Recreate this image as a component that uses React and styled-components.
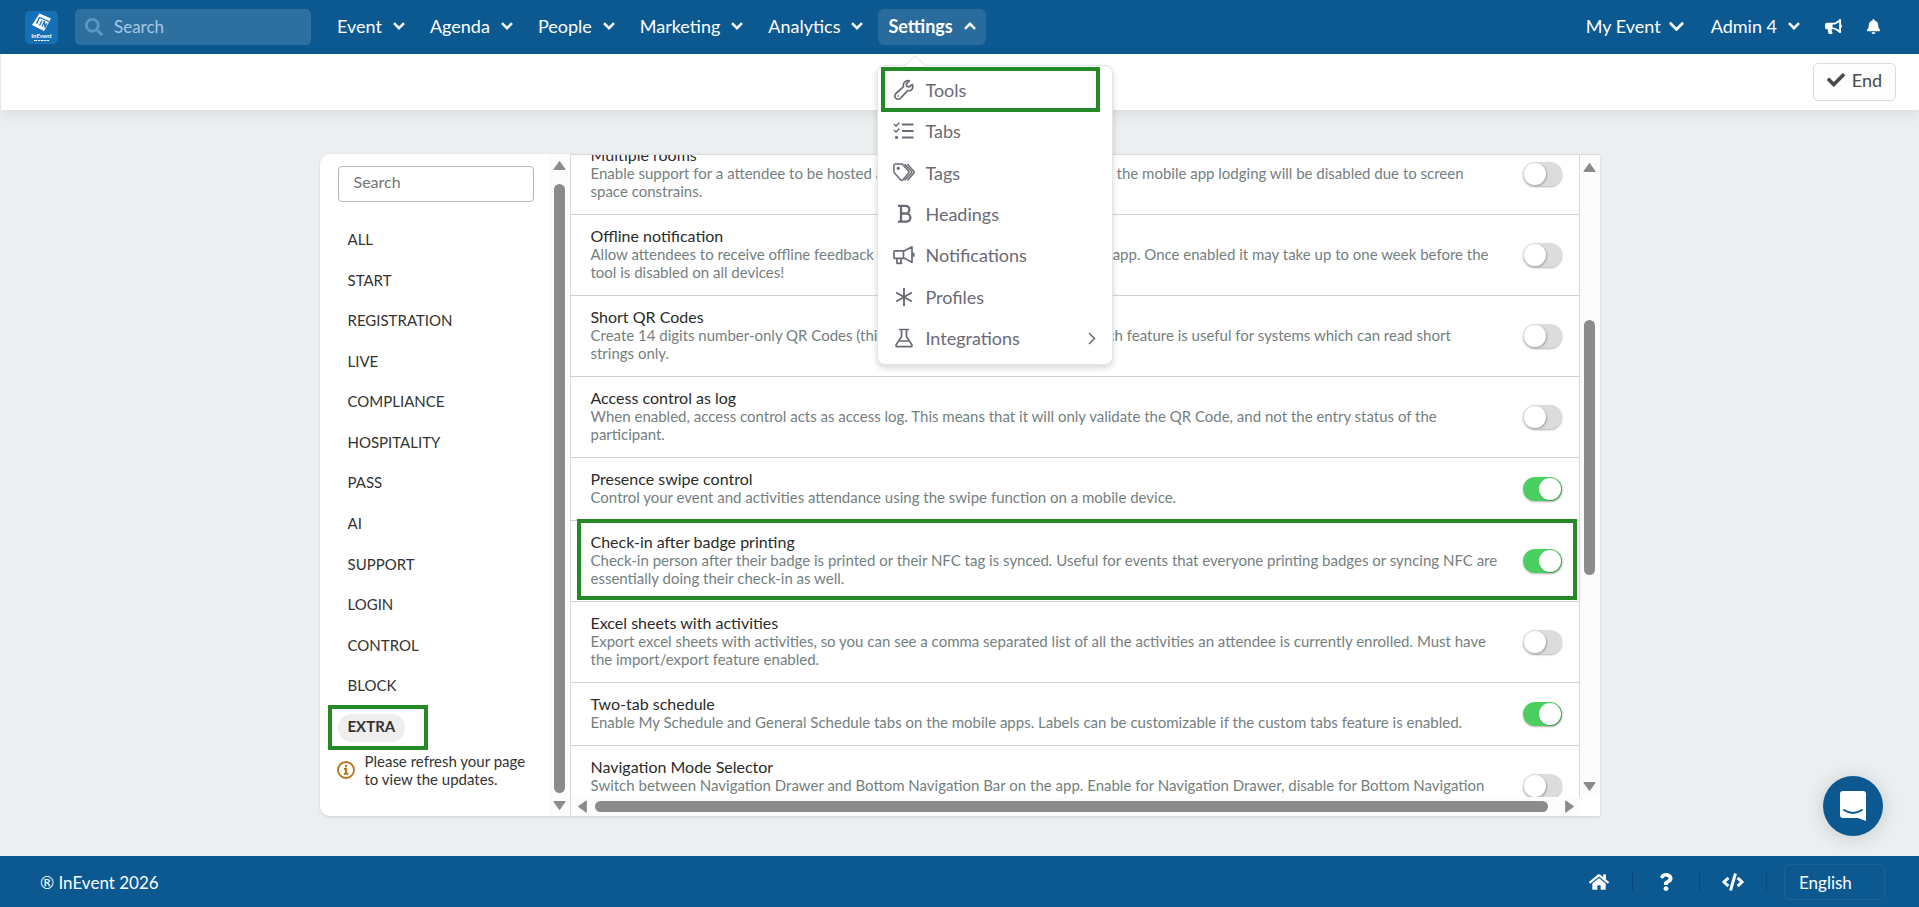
import React from "react";
import styled, { createGlobalStyle, css } from "styled-components";
import { FaSearch, FaChevronDown, FaCheck, FaBullhorn, FaBell, FaHome, FaQuestion, FaCode } from "react-icons/fa";

const Global = createGlobalStyle`
  * { box-sizing: border-box; }
  body { margin: 0; background: #ebefef; font-family: Lato, "Liberation Sans", sans-serif; color: #333; }
  button, input, select { font-family: inherit; }
`;

const Shell = styled.div`display: flex; flex-direction: column; height: 100vh; min-height: 600px;`;

const Header = styled.header`
  height: 54px; flex: none; display: flex; align-items: center; background: #0c5992;
  padding: 0 29px 0 25px; color: #fff;
`;
const Logo = styled.a`display: block; width: 33px; height: 33px; margin-right: 17px;`;
const HeaderSearch = styled.label`
  display: flex; align-items: center; width: 236px; height: 36px; border-radius: 5px;
  background: #2d6f9f; color: #5b96c6; padding-left: 10px; gap: 11px; margin-right: 16px;
  input { flex: 1; min-width: 0; border: 0; background: none; outline: 0; font-size: 17px; color: #fff; padding: 0 0 2px; }
  input::placeholder { color: #a5c8e4; opacity: 1; }
`;
const Nav = styled.nav`display: flex; gap: 5px; flex: 1;`;
const NavItem = styled.div`position: relative;`;
const NavButton = styled.button`
  display: flex; align-items: center; gap: ${(p) => (p.$tight ? "7px" : "11px")}; height: 36px; padding: 0 10px 2px;
  border: 0; border-radius: 6px; background: ${(p) => (p.$open ? "#2a6b9d" : "none")}; color: #fff; font-size: 18px;
  font-weight: ${(p) => (p.$open ? 700 : 400)};
`;
const Account = styled.div`display: flex; align-items: center; gap: 6px;`;
const IconButton = styled.button`
  display: flex; align-items: center; justify-content: center; width: 34px; height: 36px; padding: 0 0 2px;
  border: 0; background: none; color: #fff;
`;

const Menu = styled.div`
  position: absolute; z-index: 5; left: -1px; top: 56px; width: 236px; height: 300px; background: #fff; border-radius: 8px;
  border: 1px solid #e3e4e6; box-shadow: 0 3px 6px rgba(0,0,0,.16); padding: 3px 12px 5px 3px;
  display: grid; grid-auto-rows: 1fr;
`;
const MenuArrow = styled.svg`position: absolute; left: 26px; top: -11px;`;
const MenuLink = styled.a`
  display: flex; align-items: center; gap: 10px; padding: 0 4px 0 12px; color: #6b6a75;
  font-size: 18px; text-decoration: none;
  ${(p) => p.$marked && css`
    margin: -2px 0; padding: 0 4px 0 8px; border: 4px solid #258925;
  `}
  span { flex: 1; }
`;

const ActionBar = styled.div`
  flex: none; height: 56px; display: flex; justify-content: flex-end; align-items: flex-start; background: #fff;
  padding: 9px 23px; box-shadow: 0 4px 12px rgba(0,0,0,.08); border-left: 1px solid #e4e8ea;
`;
const EndButton = styled.button`
  height: 38px; width: 83px; display: flex; align-items: center; justify-content: center; gap: 7px; padding: 0 0 4px;
  border: 1px solid #dcdcdc; border-radius: 5px; background: #fdfdfd; font-size: 18px; color: #4a4a4a;
`;

const Main = styled.main`flex: 1; min-height: 0; padding: 44px 20px 40px; display: flex; justify-content: center;`;
const Card = styled.section`
  width: 100%; max-width: 1280px; display: flex; background: #fff; border-radius: 10px 0 0 10px;
  box-shadow: 0 1px 3px rgba(0,0,0,.12); overflow: hidden;
`;
const Side = styled.aside`width: 251px; flex: none; display: flex; border-right: 1px solid #d8dbdc;`;
const SideBody = styled.div`flex: 1; min-width: 0; display: flex; flex-direction: column; padding: 12px 0 28px 8px;`;
const SideSearch = styled.input`
  margin: 0 16px 17px 10px; min-width: 0; height: 36px; flex: none; border: 1px solid #b3b6b8; border-radius: 4px;
  padding: 0 15px 5px; font-size: 16px; color: #333; outline: 0;
  &::placeholder { color: #757575; opacity: 1; }
`;
const Tabs = styled.ul`flex: 1; min-height: 0; margin: 0; padding: 0; list-style: none; display: grid; grid-auto-rows: 1fr;`;
const Tab = styled.li`
  display: flex; align-items: center; padding-left: 10px;
  ${(p) => p.$active && css`
    width: 100px; margin: 0 0 -4px; padding-left: 6px; border: 4px solid #258925;
  `}
`;
const TabLink = styled.a`
  display: flex; align-items: center; height: 28px; padding: 0 10px; border-radius: 14px; font-size: 15px; color: #333;
  text-decoration: none; ${(p) => p.$active && css`font-weight: 700; background: #eeeeee; padding-bottom: 3px;`}
`;
const Notice = styled.p`
  margin: 6px 0 0; padding-left: 9px; display: flex; align-items: center; gap: 10px; font-size: 15px; line-height: 18px; color: #333;
  span { flex: 1; max-width: 170px; }
`;

const VBar = styled.div`
  width: 20px; display: flex; flex-direction: column; align-items: center; flex: none; background: #fcfcfc;
  padding: ${(p) => p.$pad}; gap: ${(p) => p.$gap};
`;
const Track = styled.div`flex: 1; align-self: stretch; display: flex; flex-direction: ${(p) => (p.$row ? "row" : "column")}; align-items: center;`;
const Thumb = styled.div`
  border-radius: 6px; background: #8b8b8b; flex: ${(p) => p.$size};
  ${(p) => (p.$row ? "height: 11px;" : "width: 11px;")}
`;
const Spacer = styled.div`flex: ${(p) => p.$size};`;
const HBar = styled.div`
  display: flex; align-items: center; height: 19px; background: #fcfcfc; padding: 0 5px 0 6px; gap: 8px;
`;

const Content = styled.div`
  flex: 1; min-width: 0; display: grid; grid-template-columns: minmax(0, 1fr) 20px;
  grid-template-rows: minmax(0, 1fr) 19px; border-top: 1px solid #d8dbdc;
`;
const Viewport = styled.div`overflow: hidden; border-right: 1px solid #d8dbdc;`;
const Rows = styled.div`margin-top: -21px;`;
const Row = styled.div`
  position: relative; display: flex; align-items: center; padding: 12px 17px 14px 20px; border-bottom: 1px solid #d0d3d4;
  ${(p) => p.$marked && css`
    &::after { content: ""; position: absolute; inset: -2px 2px 1px 6px; border: 4px solid #258925; pointer-events: none; }
  `}
`;
const RowText = styled.div`flex: 1; min-width: 0; margin-right: 24px;`;
const RowTitle = styled.label`display: block; font-size: 16px; line-height: 18px; color: #2b2b2b;`;
const RowNote = styled.p`margin: 0; font-size: 15px; line-height: 18px; color: #74807f;`;
const Switch = styled.input`
  appearance: none; flex: none; margin: 2px 0 0; width: 39px; height: 24px; border-radius: 12px; padding: 1px;
  background: ${(p) => (p.defaultChecked ? "#4ccf61" : "#dcdcdc")}; box-shadow: 0 1px 2px rgba(0,0,0,.3);
  display: flex; justify-content: ${(p) => (p.defaultChecked ? "flex-end" : "flex-start")};
  &::before { content: ""; width: 22px; height: 22px; border-radius: 50%; background: #fff; box-shadow: 1px 1px 2px rgba(0,0,0,.25); }
`;

const Footer = styled.footer`
  flex: none; height: 51px; background: #0c5992; color: #fff; display: flex; align-items: center;
  padding: 1px 34px 0 40px; font-size: 17px;
  > span { flex: 1; }
`;
const FooterLink = styled.a`
  width: 67px; height: 20px; display: flex; align-items: center; justify-content: center; color: #fff;
  border-right: 1px solid #0a4a7b;
`;
const Language = styled.select`
  appearance: none; width: 101px; height: 36px; margin-left: 17px; padding: 0 14px; border: 1px solid #1a639a; border-radius: 5px;
  background: none; color: #fff; font-size: 17px;
`;
const Chat = styled.button`
  position: fixed; right: 36px; bottom: 71px; width: 60px; height: 60px; border: 0; border-radius: 50%; padding: 0;
  background: #0c5992; box-shadow: 0 2px 20px rgba(0,0,0,.15); display: flex; align-items: center; justify-content: center;
`;

const Chevron = ({ up }) => (
  <svg width="12" height="8" viewBox="0 0 12 8" fill="none" stroke="currentColor" strokeWidth="2.5">
    <path d={up ? "M1 6.800 6 1.800l5 5" : "M1 1.200l5 5 5-5"} />
  </svg>
);
const Arrow = ({ dir }) => {
  const d = {
    up: "M6.5 0.8 12.4 9a.6.6 0 0 1-.5.9H1.1a.6.6 0 0 1-.5-.9z",
    down: "M6.5 9.2.6 1A.6.6 0 0 1 1.1.1h10.8a.6.6 0 0 1 .5.9z",
    left: "M.8 6.5 9 .6a.6.6 0 0 1 .9.5v10.8a.6.6 0 0 1-.9.5z",
    right: "M9.2 6.5 1 .6a.6.6 0 0 0-.9.5v10.8a.6.6 0 0 0 .9.5z",
  };
  const flat = dir === "up" || dir === "down";
  return (
    <svg width={flat ? 13 : 10} height={flat ? 10 : 13} fill="#8b8b8b"><path d={d[dir]} /></svg>
  );
};

const LogoArt = () => (
  <svg width="33" height="33" viewBox="0 0 33 33" role="img" aria-label="InEvent">
    <rect width="33" height="33" rx="5" fill="#1670b5" />
    <path d="M14.500 2.500 26 7.500 19 20 7 14z" fill="#fff" />
    <path d="M11.500 12.800 14.500 6.500 24 10.500M14.500 14.500 17 9.500M17 15.500l2.500-5.300.3 6.300 2-4.300" stroke="#1670b5" strokeWidth="1.300" fill="none" />
    <text x="16.500" y="27" fontSize="6" fontWeight="700" textAnchor="middle" fill="#fff">InEvent</text>
    <path d="M9 29.500h15" stroke="#fff" strokeWidth="1.200" strokeDasharray="3 .8 2 .8" />
  </svg>
);

const Line = ({ children }) => (
  <svg width="22" height="22" viewBox="0 0 22 22" fill="none" stroke="currentColor" strokeWidth="1.7" strokeLinejoin="round" strokeLinecap="round">{children}</svg>
);
const menu = [
  ["Tools", <path d="M19.300 5.500 16 8l-2.200-.6L13.200 5l3-3.200c-3.500-.8-6.700 2-5.700 5.900L3 14.500c-3.200 3.200 1.200 8 4.600 4.600L14.600 11.600c4 .8 6.200-2.600 4.700-6.100zM5.300 16.900v.1" />],
  ["Tabs", <><path d="M1.500 4.500 3 6 6 3M1.500 10.500 3 12 6 9" strokeWidth="1.600" /><circle cx="3.500" cy="17.500" r="1.200" fill="currentColor" strokeWidth="1" /><path d="M9 4.500h11.500M9 11h11.500M9 17.500h11.500" strokeWidth="2" strokeLinecap="butt" /></>],
  ["Tags", <><path d="M.9 3.300q0-1.300 1.300-1.300h6.300q.7 0 1.200.5l6 6.700q.8.900 0 1.700l-6 7q-1 1-2 0L1.500 11q-.6-.6-.6-1.400zM12 2.500l6.500 7q.7.700 0 1.400L12 18M14.800 2.500l6.200 7q.7.700 0 1.400l-6.200 7" strokeWidth="1.500" /><circle cx="5.200" cy="6.300" r=".8" fill="currentColor" /></>],
  ["Headings", <path d="M5 2.800h7.500a3.700 3.700 0 0 1 0 7.700H8.500h4.800a4 4 0 0 1 0 8.200H5M8 2.800v15.900" strokeWidth="2.300" strokeLinecap="butt" />],
  ["Notifications", <path d="M2 6.800h9.500l7.500-4v15.500l-7.500-4H2q-1 0-1-1V7.800q0-1 1-1zM10.500 6.800v7.500M4 14.300v5h4.500q-1-2-.5-5M20.700 9.300v2.800" />],
  ["Profiles", <path d="M11 2v18M3.200 6.500l15.600 9M18.800 6.500l-15.600 9" strokeLinecap="butt" strokeWidth="1.900" />],
  ["Integrations", <path d="M6.500 2.500h9M8.500 2.500v7L3.200 17.800q-.7 1.900 1.300 1.900h13q2 0 1.300-1.900l-5.300-8.300v-7M6 14h10" />],
];

const tabs = ["ALL", "START", "REGISTRATION", "LIVE", "COMPLIANCE", "HOSPITALITY", "PASS", "AI", "SUPPORT", "LOGIN", "CONTROL", "BLOCK", "EXTRA"];
const tools = [
  ["Multiple rooms", "Enable support for a attendee to be hosted at different rooms. When turned on, the mobile app lodging will be disabled due to screen space constrains.", false],
  ["Offline notification", "Allow attendees to receive offline feedback notifications directly in your mobile app. Once enabled it may take up to one week before the tool is disabled on all devices!", false],
  ["Short QR Codes", "Create 14 digits number-only QR Codes (this is for the last attendees only), which feature is useful for systems which can read short strings\u00a0only.", false],
  ["Access control as log", "When enabled, access control acts as access log. This means that it will only validate the QR Code, and not the entry status of the participant.", false],
  ["Presence swipe control", "Control your event and activities attendance using the swipe function on a mobile device.", true],
  ["Check-in after badge printing", "Check-in person after their badge is printed or their NFC tag is synced. Useful for events that everyone printing badges or syncing NFC are essentially doing their check-in as well.", true, true],
  ["Excel sheets with activities", "Export excel sheets with activities, so you can see a comma separated list of all the activities an attendee is currently enrolled. Must have the import/export feature enabled.", false],
  ["Two-tab schedule", "Enable My Schedule and General Schedule tabs on the mobile apps. Labels can be customizable if the custom tabs feature is enabled.", true],
  ["Navigation Mode Selector", "Switch between Navigation Drawer and Bottom Navigation Bar on the app. Enable for Navigation Drawer, disable for Bottom Navigation Bar.", false],
];

export default function App() {
  return (
    <Shell>
      <Global />
      <Header>
        <Logo href="#" aria-label="InEvent"><LogoArt /></Logo>
        <HeaderSearch>
          <FaSearch size={18} />
          <input type="search" placeholder="Search" aria-label="Search" />
        </HeaderSearch>
        <Nav>
          {["Event", "Agenda", "People", "Marketing", "Analytics"].map((n) => (
            <NavItem key={n}><NavButton>{n}<Chevron /></NavButton></NavItem>
          ))}
          <NavItem>
            <NavButton $open aria-expanded="true">Settings<Chevron up /></NavButton>
            <Menu>
              <MenuArrow width="22" height="12" fill="#fff" stroke="#dcdee0"><path d="M0 11.500 11 .7l11 10.800" /></MenuArrow>
              {menu.map(([label, icon]) => (
                <MenuLink key={label} href="#" $marked={label === "Tools"}>
                  <Line>{icon}</Line><span>{label}</span>
                  {label === "Integrations" && (
                    <svg width="8" height="13" fill="none" stroke="currentColor" strokeWidth="1.500"><path d="m1 1 5.500 5.500L1 12" /></svg>
                  )}
                </MenuLink>
              ))}
            </Menu>
          </NavItem>
        </Nav>
        <Account>
          <NavButton $tight>My Event<FaChevronDown size={17} /></NavButton>
          <NavButton>Admin 4<Chevron /></NavButton>
          <IconButton aria-label="Announcements"><FaBullhorn size={17} /></IconButton>
          <IconButton aria-label="Notifications"><FaBell size={15} /></IconButton>
        </Account>
      </Header>
      <ActionBar><EndButton><FaCheck size={18} />End</EndButton></ActionBar>
      <Main>
        <Card>
          <Side>
            <SideBody>
              <SideSearch type="search" placeholder="Search" aria-label="Search tools" />
              <Tabs>
                {tabs.map((t) => (
                  <Tab key={t} $active={t === "EXTRA"}><TabLink href="#" $active={t === "EXTRA"}>{t}</TabLink></Tab>
                ))}
              </Tabs>
              <Notice>
                <svg width="18" height="18" fill="none" stroke="#b8741a" strokeWidth="1.800"><circle cx="9" cy="9" r="8" /><path d="M9 4v2.200M7 8h2v4.500M6.800 12.800h4.500" strokeWidth="2" /></svg>
                <span>Please refresh your page to view the updates.</span>
              </Notice>
            </SideBody>
            <VBar $pad="6px 0 5px" $gap="8px">
              <Arrow dir="up" /><Track><Spacer $size="0 0 6px" /><Thumb $size={1} /></Track><Arrow dir="down" />
            </VBar>
          </Side>
          <Content>
            <Viewport>
              <Rows>
                {tools.map(([title, note, on, marked], i) => (
                  <Row key={title} $marked={marked}>
                    <RowText>
                      <RowTitle htmlFor={`tool-${i}`}>{title}</RowTitle>
                      <RowNote>{note}</RowNote>
                    </RowText>
                    <Switch type="checkbox" id={`tool-${i}`} defaultChecked={on} />
                  </Row>
                ))}
              </Rows>
            </Viewport>
            <VBar $pad="7px 0 5px" $gap="15px">
              <Arrow dir="up" />
              <Track><Spacer $size={133} /><Thumb $size={256} /><Spacer $size={193} /></Track>
              <Arrow dir="down" />
            </VBar>
            <HBar>
              <Arrow dir="left" />
              <Track $row><Thumb $row $size={954} /><Spacer $size={9} /></Track>
              <Arrow dir="right" />
            </HBar>
          </Content>
        </Card>
      </Main>
      <Footer>
        <span>® InEvent 2026</span>
        <FooterLink href="#" aria-label="Home"><FaHome size={20} /></FooterLink>
        <FooterLink href="#" aria-label="Help"><FaQuestion size={18} /></FooterLink>
        <FooterLink href="#" aria-label="Developers"><FaCode size={22} /></FooterLink>
        <Language aria-label="Language"><option>English</option></Language>
      </Footer>
      <Chat aria-label="Open chat">
        <svg width="28" height="32" viewBox="0 0 28 32"><path d="M4 1h20a3 3 0 0 1 3 3v27l-8-3H4a3 3 0 0 1-3-3V4a3 3 0 0 1 3-3z" fill="#fff" /><path d="M5 20q9 6 18 0" fill="none" stroke="#0c5992" strokeWidth="2" strokeLinecap="round" /></svg>
      </Chat>
    </Shell>
  );
}
